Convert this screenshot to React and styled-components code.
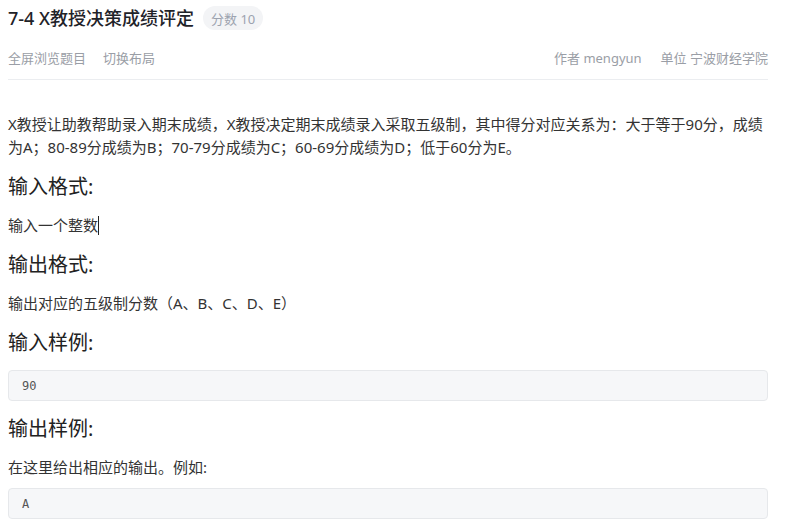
import React from "react";
import styled, { createGlobalStyle } from "styled-components";

const Global = createGlobalStyle`
  html, body { margin: 0; padding: 0; background: #fff; }
  body { font-family: "Noto Sans", "Noto Sans CJK SC", sans-serif; color: #1f2329; }
  * { box-sizing: border-box; }
`;

const Page = styled.div`
  padding: 0 20px 0 8px;
  width: 788px;
`;

const TitleRow = styled.div`
  display: flex;
  align-items: center;
  gap: 9px;
  height: 36px;
`;

const Title = styled.h1`
  margin: 0;
  font-size: 18px;
  line-height: 26px;
  font-weight: 500;
  color: #1f2329;
`;

const Badge = styled.span`
  display: inline-flex;
  align-items: center;
  height: 24px;
  padding: 0 8px;
  border-radius: 12px;
  background: #f3f4f6;
  color: #9ca3af;
  font-size: 13px;
`;

const MetaRow = styled.div`
  display: flex;
  justify-content: space-between;
  align-items: center;
  height: 44px;
  border-bottom: 1px solid #ebedf0;
  font-size: 13px;
  color: #9a9ea6;
`;

const MetaGroup = styled.div`
  display: flex;
  gap: ${(p) => p.$gap}px;
`;

const Content = styled.div`
  padding-top: 33px;
  color: #333;
`;

const P = styled.p`
  margin: 0;
  font-size: 15px;
  line-height: 23px;
`;

const H = styled.h3`
  margin: 14px 0 13px;
  font-size: 20px;
  line-height: 28px;
  font-weight: 400;
  color: #222;
`;

const Pre = styled.pre`
  margin: ${(p) => p.$mt}px 0 0;
  height: 31px;
  padding: 0 13px;
  display: flex;
  align-items: center;
  background: #f6f7f9;
  border: 1px solid #e6e8eb;
  border-radius: 4px;
  font-family: "DejaVu Sans Mono", monospace;
  font-size: 12px;
  color: #555;
`;

const Caret = styled.span`
  display: inline-block;
  width: 1px;
  height: 19px;
  background: #222;
  vertical-align: -4px;
`;

export default function App() {
  return (
    <Page>
      <Global />
      <TitleRow>
        <Title>7-4 X教授决策成绩评定</Title>
        <Badge>分数 10</Badge>
      </TitleRow>
      <MetaRow>
        <MetaGroup $gap={17}>
          <span>全屏浏览题目</span>
          <span>切换布局</span>
        </MetaGroup>
        <MetaGroup $gap={19}>
          <span>作者 mengyun</span>
          <span>单位 宁波财经学院</span>
        </MetaGroup>
      </MetaRow>
      <Content>
        <P>
          X教授让助教帮助录入期末成绩，X教授决定期末成绩录入采取五级制，其中得分对应关系为：大于等于90分，成绩为A；80-89分成绩为B；70-79分成绩为C；60-69分成绩为D；低于60分为E。
        </P>
        <H>输入格式:</H>
        <P>
          输入一个整数<Caret />
        </P>
        <H>输出格式:</H>
        <P>输出对应的五级制分数（A、B、C、D、E）</P>
        <H>输入样例:</H>
        <Pre $mt={0}>90</Pre>
        <H>输出样例:</H>
        <P>在这里给出相应的输出。例如:</P>
        <Pre $mt={9}>A</Pre>
      </Content>
    </Page>
  );
}
